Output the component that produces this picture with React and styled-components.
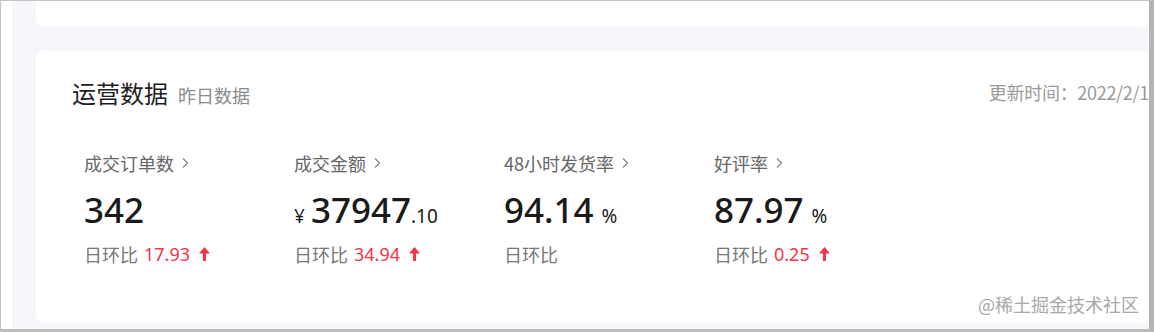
import React from 'react';
import styled, { createGlobalStyle } from 'styled-components';

const metrics = [
    { label: '成交订单数', value: '342', change: '17.93', up: true },
    { label: '成交金额', prefix: '¥', value: '37947', decimal: '.10', change: '34.94', up: true },
    { label: '48小时发货率', value: '94.14', unit: '%' },
    { label: '好评率', value: '87.97', unit: '%', change: '0.25', up: true },
];

const Chevron = () => (
    <svg width="9" height="12" viewBox="0 0 9 12">
        <path d="M2 1.5 L6.5 6 L2 10.5" fill="none" stroke="#888" strokeWidth="1.3" />
    </svg>
);

const UpArrow = () => (
    <svg width="13" height="16" viewBox="0 0 13 16">
        <path d="M6.5 1 L12 7.5 L8 7.5 L8 15 L5 15 L5 7.5 L1 7.5 Z" fill="#f5334a" />
    </svg>
);

export default function App() {
    return (
        <>
            <GlobalStyle />
            <Frame>
                <Page>
                    <TopCard />
                    <DataCard>
                        <Header>
                            <TitleGroup>
                                <Title>运营数据</Title>
                                <Subtitle>昨日数据</Subtitle>
                            </TitleGroup>
                            <UpdateTime>更新时间：2022/2/1</UpdateTime>
                        </Header>
                        <MetricRow>
                            {metrics.map((m) => (
                                <Metric key={m.label}>
                                    <MetricLabel>
                                        {m.label}
                                        <Chevron />
                                    </MetricLabel>
                                    <MetricValue>
                                        {m.prefix && <Small $left>{m.prefix}</Small>}
                                        {m.value}
                                        {m.decimal && <Small>{m.decimal}</Small>}
                                        {m.unit && <Small $gap>{m.unit}</Small>}
                                    </MetricValue>
                                    <Change>
                                        日环比
                                        {m.change && (
                                            <ChangeValue>
                                                {m.change}
                                                {m.up && <UpArrow />}
                                            </ChangeValue>
                                        )}
                                    </Change>
                                </Metric>
                            ))}
                        </MetricRow>
                    </DataCard>
                </Page>
                <Watermark>@稀土掘金技术社区</Watermark>
            </Frame>
        </>
    );
}

// Css styled components

const GlobalStyle = createGlobalStyle`
    body {
        margin: 0;
        background: #ffffff;
        font-family: "Noto Sans", "Noto Sans CJK SC", sans-serif;
    }
`;

const Frame = styled.div`
    position: relative;
    box-sizing: border-box;
    width: 1154px;
    height: 332px;
    border-left: 1px solid #c4c4c4;
    border-top: 1px solid #c4c4c4;
    border-right: 5px solid #b4b4b4;
    border-bottom: 3px solid #bcbcbc;
    padding-left: 11px;
    background: #ffffff;
    overflow: hidden;
`;

const Page = styled.div`
    display: flex;
    flex-direction: column;
    gap: 24px;
    height: 100%;
    padding-left: 24px;
    background: #f5f6fa;
`;

const TopCard = styled.div`
    height: 26px;
    background: #ffffff;
    border-bottom-left-radius: 8px;
`;

const DataCard = styled.div`
    height: 272px;
    box-sizing: border-box;
    padding: 24px 0 0 36px;
    background: #ffffff;
    border-top-left-radius: 8px;
    border-bottom-left-radius: 8px;
`;

const Header = styled.div`
    display: flex;
    align-items: center;
    justify-content: space-between;
    height: 34px;
`;

const TitleGroup = styled.div`
    display: flex;
    align-items: baseline;
    gap: 10px;
`;

const Title = styled.div`
    font-family: "Noto Sans CJK SC", sans-serif;
    font-size: 24px;
    color: #1d1d1f;
`;

const Subtitle = styled.div`
    font-family: "Noto Sans CJK SC", sans-serif;
    font-size: 18px;
    color: #8a8a8a;
`;

const UpdateTime = styled.div`
    font-family: "Noto Sans CJK SC", sans-serif;
    font-size: 18px;
    letter-spacing: -0.3px;
    color: #9a9a9a;
    white-space: nowrap;
`;

const MetricRow = styled.div`
    display: flex;
    margin-top: 41px;
    padding-left: 12px;
`;

const Metric = styled.div`
    display: flex;
    flex-direction: column;
    width: 210px;
`;

const MetricLabel = styled.div`
    display: flex;
    align-items: center;
    gap: 7px;
    height: 26px;
    font-family: "Noto Sans CJK SC", sans-serif;
    font-size: 18px;
    color: #666666;
`;

const MetricValue = styled.div`
    display: flex;
    align-items: baseline;
    height: 44px;
    margin-top: 12px;
    font-size: 35px;
    font-weight: 500;
    line-height: 44px;
    color: #1a1a1a;
`;

const Small = styled.span`
    font-size: 19px;
    font-weight: 400;
    margin-right: ${(p) => (p.$left ? '6px' : '0')};
    margin-left: ${(p) => (p.$gap ? '8px' : '0')};
`;

const Change = styled.div`
    display: flex;
    align-items: center;
    gap: 6px;
    height: 26px;
    margin-top: 9px;
    font-family: "Noto Sans CJK SC", sans-serif;
    font-size: 18px;
    color: #777777;
`;

const ChangeValue = styled.span`
    display: flex;
    align-items: center;
    gap: 8px;
    font-family: "Noto Sans", sans-serif;
    color: #f5334a;
`;

const Watermark = styled.div`
    position: absolute;
    right: 10px;
    bottom: 12px;
    font-family: "Noto Sans CJK SC", sans-serif;
    font-size: 18px;
    color: #a8a8a8;
    text-shadow: 0 0 2px #ffffff;
`;
